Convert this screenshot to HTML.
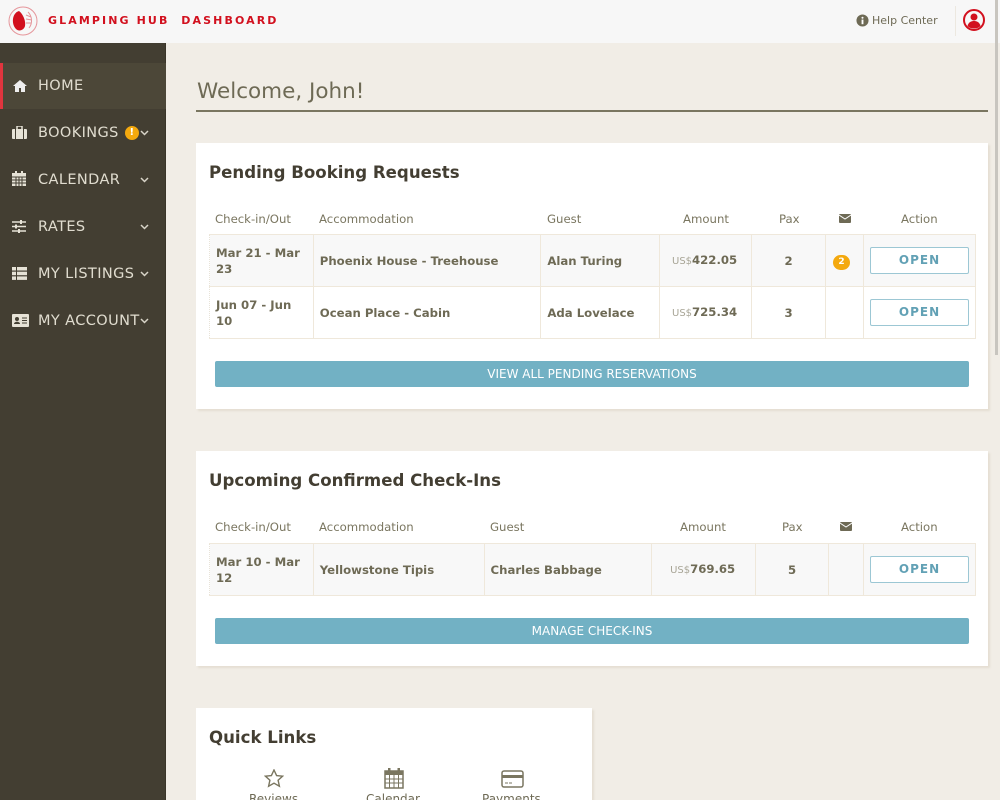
<!DOCTYPE html>
<html><head><meta charset="utf-8"><style>
*{box-sizing:border-box;margin:0;padding:0}
html{overflow:hidden;width:1000px;height:800px}
body{width:1000px;height:800px;overflow:hidden;background:#f1ede6;font-family:"DejaVu Sans","Liberation Sans",sans-serif;color:#6e6a55;position:relative}
.hdr{position:absolute;left:0;top:0;width:1000px;height:43px;background:#f7f7f7}
.brand{position:absolute;left:48px;top:14px;font-size:11px;font-weight:bold;letter-spacing:2.1px;color:#d2101e}
.side{position:absolute;left:0;top:43px;width:166px;height:757px;background:#433e32;border-right:1px solid #3a3529}
.nav{position:absolute;left:0;width:166px;height:46px;color:#e0dccf;font-size:14.5px;letter-spacing:0.4px}
.nav .t{position:absolute;left:38px;top:15px}
.nav .ic{position:absolute;left:12px;top:16px}
.nav .ch{position:absolute;left:140px;top:20px}
.home{background:#4c4738;border-left:3px solid #e0353e}
.card{position:absolute;background:#fff;box-shadow:2px 2px 2px #e4ded2}
h2{position:absolute;left:13px;font-size:16.6px;font-weight:bold;color:#433e32}
.th{position:absolute;font-size:11.7px;color:#7a7660}
table{position:absolute;left:13px;border-collapse:collapse;font-size:11.7px;font-weight:bold;color:#6e6a55;line-height:16px}
td{border:1px solid #efe8db;border-left:1px dotted #e8e3d8;padding:0 6px;height:52px;vertical-align:middle}
td.c{text-align:center}
.us{font-weight:normal;font-size:10px;color:#a8a596}
.open{display:inline-block;width:99px;height:27px;border:1px solid #9cc7d4;color:#62a1b5;font-size:12px;letter-spacing:1px;line-height:25px;text-align:center;border-radius:2px;background:#fff}
.btn{position:absolute;left:19px;width:754px;height:26px;background:#72b1c4;color:#fff;font-size:12px;text-align:center;line-height:26px;border-radius:2px}
.badge{display:inline-block;width:17px;height:15px;border-radius:8px;background:#f4a90e;color:#fff;font-size:9px;line-height:15px;text-align:center}
</style></head><body>
<div class="hdr">
<svg style="position:absolute;left:8px;top:6px" width="30" height="30" viewBox="0 0 30 30"><circle cx="15" cy="15" r="14" fill="none" stroke="#e5969b" stroke-width="1"/><path d="M11 5C4 7 3 18 8 23c3 3 8 1 9-3C18 15 15 8 11 5z" fill="#d2101e"/><path d="M20 6c4 4 5 11 1 16M18 9l5 2M18 13l6 1M18 17l5 0" stroke="#e5969b" fill="none" stroke-width="1"/></svg>
<div class="brand">GLAMPING HUB &nbsp;DASHBOARD</div>
<svg style="position:absolute;left:856px;top:14px" width="13" height="13" viewBox="0 0 14 14"><circle cx="7" cy="7" r="6.5" fill="#6e6a55"/><rect x="6" y="6" width="2" height="5" fill="#fff"/><circle cx="7" cy="4" r="1.1" fill="#fff"/></svg>
<div style="position:absolute;left:872px;top:14px;font-size:11px;color:#6e6a55">Help Center</div>
<div style="position:absolute;left:955px;top:6px;width:1px;height:30px;background:#ece8e0"></div>
<svg style="position:absolute;left:963px;top:9px" width="22" height="22" viewBox="0 0 22 22"><circle cx="11" cy="11" r="10" fill="none" stroke="#d2101e" stroke-width="2"/><circle cx="11" cy="8" r="3.5" fill="#d2101e"/><path d="M4.5 17c1-4 4-5 6.5-5s5.5 1 6.5 5c-2 2-4 2.5-6.5 2.5S6.5 19 4.5 17z" fill="#d2101e"/></svg>
</div>
<div style="position:absolute;left:995px;top:0;width:3px;height:355px;background:#c8c5bf"></div>
<div class="side">
<div class="nav home" style="top:20px"><svg class="ic" style="left:10px;top:17px" width="14" height="12" viewBox="0 0 14 12"><path d="M7 0L0 6h2v6h4V8h2v4h4V6h2z" fill="#eee"/></svg><span class="t" style="left:35px">HOME</span></div>
<div class="nav" style="top:67px"><svg class="ic" width="15" height="13" viewBox="0 0 15 13"><rect x="0" y="3" width="15" height="10" rx="1" fill="#e6e2d6"/><rect x="5" y="0" width="5" height="4" fill="none" stroke="#e6e2d6" stroke-width="1.5"/><rect x="3" y="3" width="1" height="10" fill="#433e32"/><rect x="11" y="3" width="1" height="10" fill="#433e32"/></svg><span class="t">BOOKINGS</span><span class="badge" style="position:absolute;left:125px;top:16px;width:14px;height:14px;font-weight:bold;font-size:10px;line-height:14px">!</span><svg class="ch" width="9" height="6" viewBox="0 0 9 6"><path d="M1 1l3.5 3.5L8 1" stroke="#d8d4c8" stroke-width="1.5" fill="none"/></svg></div>
<div class="nav" style="top:114px"><svg class="ic" style="top:14px" width="14" height="15" viewBox="0 0 14 15"><rect x="0" y="2" width="14" height="13" fill="#e6e2d6"/><path d="M0 6h14M0 9h14M0 12h14M4 6v9M7 6v9M10 6v9" stroke="#433e32" stroke-width="1"/><rect x="3" y="0" width="2" height="4" fill="#e6e2d6"/><rect x="9" y="0" width="2" height="4" fill="#e6e2d6"/></svg><span class="t">CALENDAR</span><svg class="ch" width="9" height="6" viewBox="0 0 9 6"><path d="M1 1l3.5 3.5L8 1" stroke="#d8d4c8" stroke-width="1.5" fill="none"/></svg></div>
<div class="nav" style="top:161px"><svg class="ic" width="14" height="13" viewBox="0 0 14 13"><path d="M0 2h14M0 6.5h14M0 11h14" stroke="#e6e2d6" stroke-width="1.5"/><rect x="8" y="0" width="2" height="4" fill="#e6e2d6"/><rect x="3" y="4.5" width="2" height="4" fill="#e6e2d6"/><rect x="6" y="9" width="2" height="4" fill="#e6e2d6"/></svg><span class="t">RATES</span><svg class="ch" width="9" height="6" viewBox="0 0 9 6"><path d="M1 1l3.5 3.5L8 1" stroke="#d8d4c8" stroke-width="1.5" fill="none"/></svg></div>
<div class="nav" style="top:208px"><svg class="ic" width="15" height="13" viewBox="0 0 15 13"><rect x="0" y="0" width="4" height="3.5" fill="#e6e2d6"/><rect x="5" y="0" width="10" height="3.5" fill="#e6e2d6"/><rect x="0" y="4.7" width="4" height="3.5" fill="#e6e2d6"/><rect x="5" y="4.7" width="10" height="3.5" fill="#e6e2d6"/><rect x="0" y="9.4" width="4" height="3.5" fill="#e6e2d6"/><rect x="5" y="9.4" width="10" height="3.5" fill="#e6e2d6"/></svg><span class="t">MY LISTINGS</span><svg class="ch" width="9" height="6" viewBox="0 0 9 6"><path d="M1 1l3.5 3.5L8 1" stroke="#d8d4c8" stroke-width="1.5" fill="none"/></svg></div>
<div class="nav" style="top:255px"><svg class="ic" width="17" height="13" viewBox="0 0 17 13"><rect x="0" y="0" width="17" height="13" rx="1" fill="#e6e2d6"/><circle cx="5" cy="5" r="2" fill="#433e32"/><path d="M2 10c0-3 6-3 6 0z" fill="#433e32"/><path d="M10 4h5M10 6.5h5M10 9h5" stroke="#433e32" stroke-width="1"/></svg><span class="t">MY ACCOUNT</span><svg class="ch" width="9" height="6" viewBox="0 0 9 6"><path d="M1 1l3.5 3.5L8 1" stroke="#d8d4c8" stroke-width="1.5" fill="none"/></svg></div>
</div>

<div style="position:absolute;left:197px;top:79px;font-size:21.5px;color:#6e6a55">Welcome, John!</div>
<div style="position:absolute;left:196px;top:110px;width:792px;height:2px;background:#7a7660"></div>

<div class="card" style="left:196px;top:143px;width:792px;height:266px">
<h2 style="top:20px">Pending Booking Requests</h2>
<div class="th" style="left:19px;top:69px">Check-in/Out</div>
<div class="th" style="left:123px;top:69px">Accommodation</div>
<div class="th" style="left:351px;top:69px">Guest</div>
<div class="th" style="left:487px;top:69px">Amount</div>
<div class="th" style="left:583px;top:69px">Pax</div>
<svg style="position:absolute;left:643px;top:71px" width="12" height="9" viewBox="0 0 12 9"><rect width="12" height="9" rx="1" fill="#6e6a55"/><path d="M0 1l6 4 6-4" stroke="#fff" fill="none" stroke-width="1"/></svg>
<div class="th" style="left:705px;top:69px">Action</div>
<table style="top:91px;width:767px">
<tr style="background:#f8f8f8"><td style="width:104px">Mar 21 - Mar 23</td><td style="width:228px">Phoenix House - Treehouse</td><td style="width:119px">Alan Turing</td><td style="width:92px;text-align:right;padding-right:14px"><span class="us">US$</span>422.05</td><td class="c" style="width:74px">2</td><td class="c" style="width:38px;padding:0 6px 0 0"><span class="badge">2</span></td><td class="c"><span class="open">OPEN</span></td></tr>
<tr><td>Jun 07 - Jun 10</td><td>Ocean Place - Cabin</td><td>Ada Lovelace</td><td style="text-align:right;padding-right:14px"><span class="us">US$</span>725.34</td><td class="c">3</td><td></td><td class="c"><span class="open">OPEN</span></td></tr>
</table>
<div class="btn" style="top:218px">VIEW ALL PENDING RESERVATIONS</div>
</div>

<div class="card" style="left:196px;top:451px;width:792px;height:215px">
<h2 style="top:20px">Upcoming Confirmed Check-Ins</h2>
<div class="th" style="left:19px;top:69px">Check-in/Out</div>
<div class="th" style="left:123px;top:69px">Accommodation</div>
<div class="th" style="left:294px;top:69px">Guest</div>
<div class="th" style="left:484px;top:69px">Amount</div>
<div class="th" style="left:586px;top:69px">Pax</div>
<svg style="position:absolute;left:644px;top:71px" width="12" height="9" viewBox="0 0 12 9"><rect width="12" height="9" rx="1" fill="#6e6a55"/><path d="M0 1l6 4 6-4" stroke="#fff" fill="none" stroke-width="1"/></svg>
<div class="th" style="left:705px;top:69px">Action</div>
<table style="top:92px;width:767px">
<tr style="background:#f8f8f8"><td style="width:104px">Mar 10 - Mar 12</td><td style="width:171px">Yellowstone Tipis</td><td style="width:168px">Charles Babbage</td><td style="width:104px;text-align:right;padding-right:20px"><span class="us">US$</span>769.65</td><td class="c" style="width:73px">5</td><td style="width:35px"></td><td class="c"><span class="open">OPEN</span></td></tr>
</table>
<div class="btn" style="top:167px">MANAGE CHECK-INS</div>
</div>

<div class="card" style="left:196px;top:708px;width:396px;height:92px">
<h2 style="top:20px">Quick Links</h2>
<svg style="position:absolute;left:68px;top:61px" width="20" height="19" viewBox="0 0 20 19"><path d="M10 1l2.6 5.6 6 .6-4.5 4 1.3 6L10 14.2 4.6 17.2l1.3-6-4.5-4 6-.6z" fill="none" stroke="#7a7660" stroke-width="1.4"/></svg>
<svg style="position:absolute;left:188px;top:60px" width="20" height="21" viewBox="0 0 20 21"><rect x="1" y="3" width="18" height="17" fill="none" stroke="#7a7660" stroke-width="1.5"/><rect x="1" y="3" width="18" height="4" fill="#7a7660"/><path d="M1 11h18M1 15h18M5.5 7v13M10 7v13M14.5 7v13" stroke="#7a7660" stroke-width="1"/><rect x="4" y="0" width="2.5" height="5" fill="#7a7660"/><rect x="13.5" y="0" width="2.5" height="5" fill="#7a7660"/></svg>
<svg style="position:absolute;left:305px;top:62px" width="23" height="18" viewBox="0 0 23 18"><rect x="1" y="1" width="21" height="16" rx="2" fill="none" stroke="#7a7660" stroke-width="1.5"/><rect x="1" y="5" width="21" height="3" fill="#7a7660"/><path d="M4 13h3M8 13h3" stroke="#7a7660" stroke-width="1"/></svg>
<div style="position:absolute;left:53px;top:84px;font-size:12px;color:#6e6a55">Reviews</div>
<div style="position:absolute;left:170px;top:84px;font-size:12px;color:#6e6a55">Calendar</div>
<div style="position:absolute;left:286px;top:84px;font-size:12px;color:#6e6a55">Payments</div>
</div>
</body></html>
